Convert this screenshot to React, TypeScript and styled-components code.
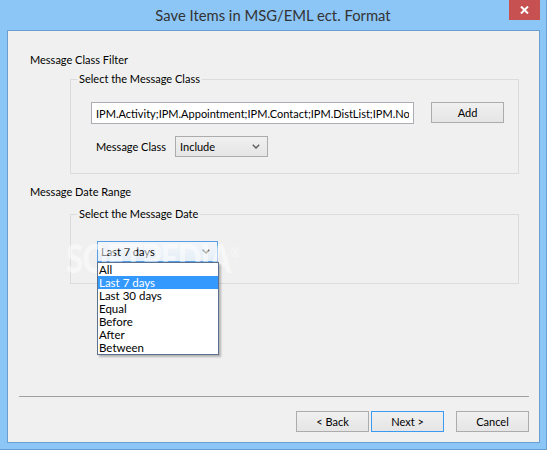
import styled, { createGlobalStyle } from 'styled-components';

const uiFont = `'Lato', 'Segoe UI', 'Noto Sans', sans-serif`;

const GlobalStyle = createGlobalStyle`
  body {
    margin: 0;
    background: #fff;
    font-family: ${uiFont};
  }
  * {
    box-sizing: border-box;
  }
`;

const Window = styled.div`
  width: 547px;
  height: 450px;
  display: flex;
  flex-direction: column;
  background: #8cc6f7;
  border-right: 1px solid #6a9fd2;
  border-bottom: 1px solid #6a9fd2;
`;

const TitleBar = styled.header`
  flex: none;
  height: 30px;
  display: grid;
  grid-template-columns: 1fr auto 1fr;
`;

const Title = styled.h1`
  grid-column: 2;
  align-self: center;
  margin: 0;
  font-size: 14.8px;
  font-weight: 400;
  color: #333;
  white-space: nowrap;
`;

const CloseButton = styled.button`
  grid-column: 3;
  justify-self: end;
  align-self: start;
  width: 31px;
  height: 20px;
  margin-right: 6px;
  padding: 0;
  border: none;
  background: #c75050;
  display: flex;
  align-items: center;
  justify-content: center;
`;

const Client = styled.main`
  position: relative;
  flex: 1;
  margin: 0 6px 6px 7px;
  border: 1px solid #6b9ed0;
  background: #f0f0f0;
  display: flex;
  flex-direction: column;
  font-size: 11px;
  color: #000;
`;

const Body = styled.section`
  padding: 21px 20px 0 22px;
  display: flex;
  flex-direction: column;
`;

const SectionLabel = styled.div<{ $top: number }>`
  margin-top: ${p => p.$top}px;
  line-height: 16px;
`;

const Group = styled.fieldset<{ $top: number }>`
  margin: ${p => p.$top}px 0 0 40px;
  padding: 0;
  min-width: 0;
  border: 1px solid #dcdcdc;
`;

const GroupTitle = styled.legend`
  margin-left: 6px;
  padding: 0 2px;
  line-height: 16px;
`;

const GroupContent = styled.div<{ $pad: string }>`
  padding: ${p => p.$pad};
  display: flex;
  flex-direction: column;
`;

const Row = styled.div<{ $top?: number; $indent?: number }>`
  display: flex;
  align-items: flex-start;
  margin-top: ${p => p.$top ?? 0}px;
  padding-left: ${p => p.$indent ?? 0}px;
`;

const TextBox = styled.input`
  width: 323px;
  height: 22px;
  padding: 0 4px;
  border: 1px solid #abadb3;
  background: #fff;
  font-family: ${uiFont};
  font-size: 11px;
  color: #000;
  outline: none;
`;

const Button = styled.button<{ $default?: boolean; $gap?: number }>`
  width: 73px;
  height: 21px;
  margin-left: ${p => p.$gap ?? 0}px;
  padding: 0;
  border: 1px solid ${p => (p.$default ? '#3c9af0' : '#acacac')};
  background: linear-gradient(#f0f0f0, #e5e5e5);
  font-family: ${uiFont};
  font-size: 11px;
  color: #000;
`;

const FieldLabel = styled.span`
  width: 79px;
  align-self: center;
  line-height: 16px;
`;

const ComboWrap = styled.div`
  position: relative;
`;

const Combo = styled.div<{ $width: number; $open?: boolean }>`
  width: ${p => p.$width}px;
  height: 21px;
  display: flex;
  align-items: center;
  justify-content: space-between;
  padding: 0 7px 0 ${p => (p.$open ? 3 : 4)}px;
  border: 1px solid ${p => (p.$open ? '#569de5' : '#acacac')};
  background: ${p =>
    p.$open ? 'linear-gradient(#f2f6fa, #e6eef6)' : 'linear-gradient(#f0f0f0, #e5e5e5)'};
`;

const DropList = styled.ul`
  position: absolute;
  z-index: 2;
  top: 100%;
  left: 0;
  width: 122px;
  margin: 0;
  padding: 0;
  list-style: none;
  background: #fff;
  border: 1px solid #5a7290;
  box-shadow: 2px 2px 2px rgba(0, 0, 0, 0.25);
  font-size: 11.5px;
`;

const DropItem = styled.li<{ $selected?: boolean }>`
  height: 13px;
  line-height: 13px;
  padding-left: 1px;
  background: ${p => (p.$selected ? '#3399ff' : 'transparent')};
  color: ${p => (p.$selected ? '#fff' : '#000')};
`;

const Watermark = styled.div`
  position: absolute;
  z-index: 1;
  left: 58px;
  top: 201px;
  font-size: 40px;
  line-height: 40px;
  font-weight: 900;
  letter-spacing: -1px;
  color: rgba(255, 255, 255, 0.55);
  transform: scaleX(0.78);
  transform-origin: left center;
  pointer-events: none;
  white-space: nowrap;

  sup {
    font-size: 14px;
    font-weight: 400;
    vertical-align: 16px;
  }
`;

const Footer = styled.footer`
  margin-top: auto;
  padding: 0 10px 10px 11px;
`;

const Separator = styled.hr`
  height: 1px;
  margin: 0 0 14px;
  border: none;
  background: #a0a0a0;
`;

const ButtonRow = styled.div`
  display: flex;
  justify-content: flex-end;
  gap: 2px;
`;

const Chevron = () => (
  <svg width="8" height="5" viewBox="0 0 8 5">
    <polyline points="0.8,0.8 4,4 7.2,0.8" fill="none" stroke="#606060" strokeWidth="1.5" />
  </svg>
);

const CloseIcon = () => (
  <svg width="9" height="8" viewBox="0 0 9 8">
    <path d="M1 0.5 L8 7.5 M8 0.5 L1 7.5" stroke="#fff" strokeWidth="2" />
  </svg>
);

const dateOptions = ['All', 'Last 7 days', 'Last 30 days', 'Equal', 'Before', 'After', 'Between'];

export default function App() {
  return (
    <>
      <GlobalStyle />
      <Window>
        <TitleBar>
          <Title>Save Items in MSG/EML ect. Format</Title>
          <CloseButton aria-label="Close">
            <CloseIcon />
          </CloseButton>
        </TitleBar>
        <Client>
          <Body>
            <SectionLabel $top={0}>Message Class Filter</SectionLabel>
            <Group $top={3}>
              <GroupTitle>Select the Message Class</GroupTitle>
              <GroupContent $pad="15px 13px 16px 20px">
                <Row>
                  <TextBox
                    readOnly
                    value="IPM.Activity;IPM.Appointment;IPM.Contact;IPM.DistList;IPM.Note;IPM.Post;IPM.StickyNote;IPM.Task"
                  />
                  <Button $gap={17}>Add</Button>
                </Row>
                <Row $top={12} $indent={5}>
                  <FieldLabel>Message Class</FieldLabel>
                  <Combo $width={93}>
                    <span>Include</span>
                    <Chevron />
                  </Combo>
                </Row>
              </GroupContent>
            </Group>

            <SectionLabel $top={10}>Message Date Range</SectionLabel>
            <Group $top={6}>
              <GroupTitle>Select the Message Date</GroupTitle>
              <GroupContent $pad="19px 0 21px 26px">
                <Row>
                  <ComboWrap>
                    <Combo $width={121} $open>
                      <span>Last 7 days</span>
                      <Chevron />
                    </Combo>
                    <DropList>
                      {dateOptions.map(option => (
                        <DropItem key={option} $selected={option === 'Last 7 days'}>
                          {option}
                        </DropItem>
                      ))}
                    </DropList>
                  </ComboWrap>
                </Row>
              </GroupContent>
            </Group>
          </Body>

          <Watermark>
            SOFTPEDIA<sup>®</sup>
          </Watermark>

          <Footer>
            <Separator />
            <ButtonRow>
              <Button>&lt; Back</Button>
              <Button $default>Next &gt;</Button>
              <Button $gap={10}>Cancel</Button>
            </ButtonRow>
          </Footer>
        </Client>
      </Window>
    </>
  );
}
